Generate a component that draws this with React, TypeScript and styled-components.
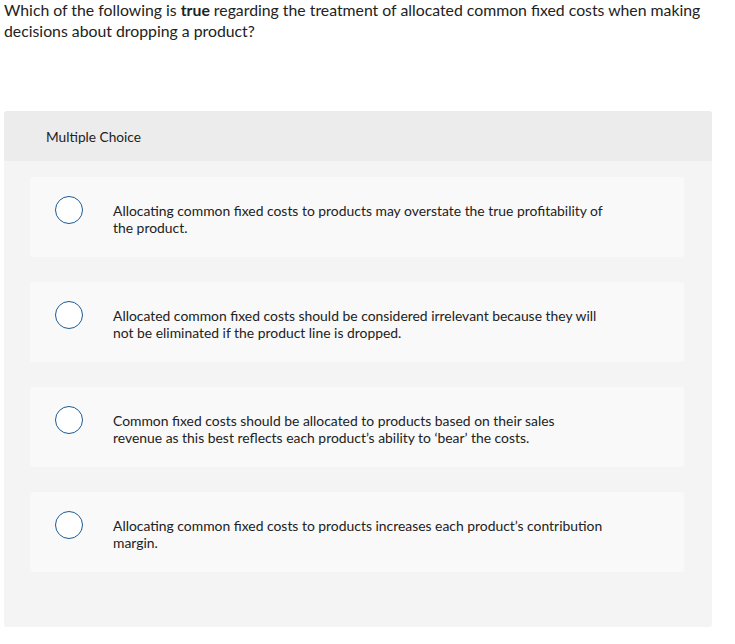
import { createGlobalStyle, styled } from "styled-components";

const GlobalStyle = createGlobalStyle`
    body {
        margin: 0;
        background: #ffffff;
        font-family: Lato, "Open Sans", Arial, sans-serif;
        color: #222222;
    }
`;

const Page = styled.div`
    padding: 0 23px 0 4px;
`;

const Question = styled.p`
    margin: -1px 0 0;
    font-size: 15.8px;
    line-height: 21px;
    color: #222222;
`;

const Strong = styled.strong`
    font-weight: 700;
`;

const Panel = styled.div`
    margin-top: 70px;
    background-color: #f4f4f4;
    border-radius: 3px;
    overflow: hidden;
`;

const PanelHeader = styled.div`
    height: 50px;
    display: flex;
    align-items: center;
    padding-left: 42px;
    background-color: #ececec;
    font-size: 13.7px;
    color: #222222;
`;

const Options = styled.div`
    display: flex;
    flex-direction: column;
    gap: 25px;
    padding: 16px 28px 55px 26px;
`;

const Option = styled.label`
    height: 80px;
    display: flex;
    align-items: center;
    gap: 30px;
    padding: 0 25px;
    background-color: #f9f9f9;
    border-radius: 3px;
    cursor: pointer;
`;

const Radio = styled.span`
    flex: none;
    align-self: flex-start;
    margin-top: 19px;
    width: 26px;
    height: 26px;
    border: 1.5px solid #1d5a96;
    border-radius: 50%;
    background: #ffffff;
`;

const OptionText = styled.span`
    max-width: 492px;
    padding-top: 4px;
    font-size: 13.9px;
    line-height: 17px;
    color: #222222;
`;

const choices = [
    "Allocating common fixed costs to products may overstate the true profitability of the product.",
    "Allocated common fixed costs should be considered irrelevant because they will not be eliminated if the product line is dropped.",
    "Common fixed costs should be allocated to products based on their sales revenue as this best reflects each product\u2019s ability to \u2018bear\u2019 the costs.",
    "Allocating common fixed costs to products increases each product\u2019s contribution margin.",
];

const App = () => {
    return (
        <Page>
            <GlobalStyle />
            <Question>
                Which of the following is <Strong>true</Strong> regarding the treatment of allocated common fixed costs
                when making decisions about dropping a product?
            </Question>
            <Panel>
                <PanelHeader>Multiple Choice</PanelHeader>
                <Options>
                    {choices.map((c) => (
                        <Option key={c}>
                            <Radio />
                            <OptionText>{c}</OptionText>
                        </Option>
                    ))}
                </Options>
            </Panel>
        </Page>
    );
};

export default App;
